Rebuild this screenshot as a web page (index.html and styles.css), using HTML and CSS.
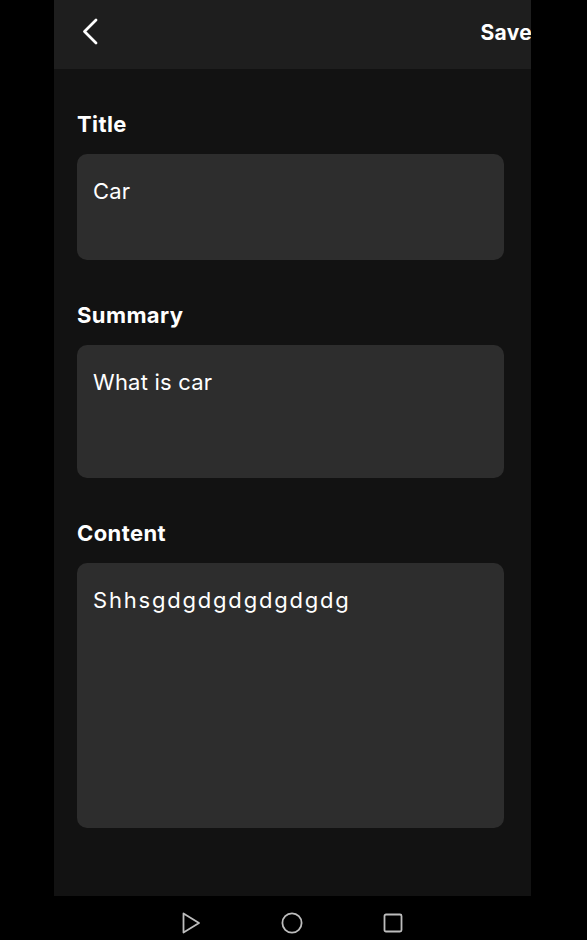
FILE: index.html
```html
<!DOCTYPE html>
<html>
<head>
    <meta charset="utf-8" />
    <title>Edit note</title>
    <link rel="stylesheet" href="styles.css">
</head>
<body>
    <section class="screen">
        <header class="topbar">
            <button class="back" aria-label="Back">
                <svg width="18" height="27" viewBox="0 0 18 27">
                    <path d="M15 2 L3.5 13.5 L15 25" fill="none" stroke="#fff" stroke-width="2.8" stroke-linecap="round" stroke-linejoin="round"/>
                </svg>
            </button>
            <span class="save">Save</span>
        </header>
        <main class="form">
            <div class="field">
                <label class="label">Title</label>
                <div class="box box-title">Car</div>
            </div>
            <div class="field">
                <label class="label">Summary</label>
                <div class="box box-summary">What is car</div>
            </div>
            <div class="field">
                <label class="label">Content</label>
                <div class="box box-content">Shhsgdgdgdgdgdgdg</div>
            </div>
        </main>
    </section>
    <nav class="navbar">
        <svg width="20" height="22" viewBox="0 0 20 22">
            <path d="M2.5 1.5 L18 11 L2.5 20.5 Z" fill="none" stroke="#bdbdbd" stroke-width="1.8" stroke-linejoin="round"/>
        </svg>
        <svg width="22" height="22" viewBox="0 0 22 22">
            <circle cx="11" cy="11" r="9.6" fill="none" stroke="#bdbdbd" stroke-width="1.8"/>
        </svg>
        <svg width="20" height="20" viewBox="0 0 20 20">
            <rect x="1.5" y="1.5" width="17" height="17" rx="1.5" fill="none" stroke="#bdbdbd" stroke-width="1.8"/>
        </svg>
    </nav>
</body>
</html>
```

FILE: styles.css
```css
* {
    padding: 0;
    margin: 0;
    box-sizing: border-box;
}
body {
    background-color: #000;
    width: 587px;
    height: 940px;
    overflow: hidden;
    font-family: Inter, "Noto Sans", sans-serif;
    color: #fff;
}
.screen {
    margin-left: 54px;
    width: 477px;
    height: 896px;
    background-color: #121212;
    overflow: hidden;
}
.topbar {
    height: 69px;
    background-color: #1e1e1e;
    display: flex;
    align-items: center;
    justify-content: space-between;
    padding-left: 27px;
}
.back {
    background: none;
    border: none;
    display: flex;
    margin-top: -6px;
}
.save {
    font-size: 21px;
    font-weight: 700;
    letter-spacing: 0.3px;
    margin-top: -4px;
    margin-right: -1px;
}
.form {
    padding: 40px 27px 0 23px;
    display: flex;
    flex-direction: column;
    gap: 40px;
}
.field {
    display: flex;
    flex-direction: column;
    gap: 15px;
}
.label {
    font-size: 22px;
    font-weight: 700;
    line-height: 30px;
    letter-spacing: 0.4px;
}
.box {
    background-color: #2d2d2d;
    border-radius: 10px;
    padding: 23px 16px;
    font-size: 22px;
    letter-spacing: 0.2px;
    line-height: 28px;
}
.box-title {
    height: 106px;
}
.box-summary {
    height: 133px;
}
.box-content {
    height: 265px;
    letter-spacing: 1.8px;
}
.navbar {
    height: 44px;
    display: flex;
    align-items: center;
    gap: 80px;
    padding: 10px 0 0 181px;
}
```
